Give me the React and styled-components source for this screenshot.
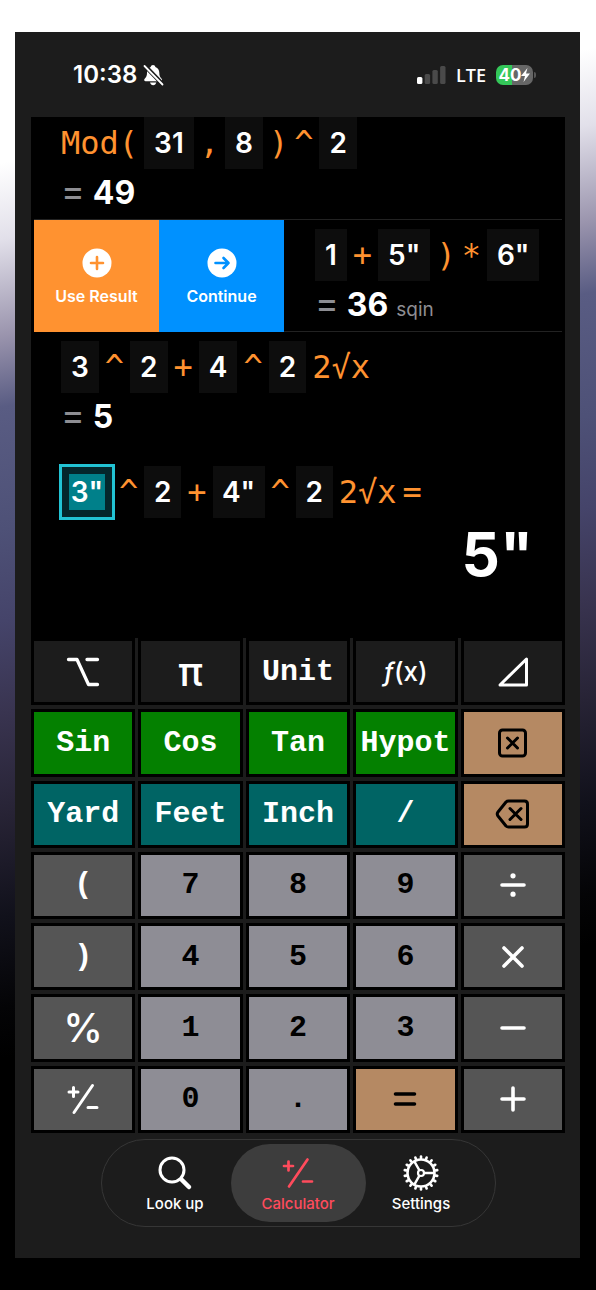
import React from "react";
import styled, { createGlobalStyle, css } from "styled-components";

const SANS = '"Inter", "Liberation Sans", sans-serif';
const MONO = '"DejaVu Sans Mono", "Liberation Mono", monospace';
const SLAB = '"Liberation Mono", "DejaVu Sans Mono", monospace';

const GlobalStyle = createGlobalStyle`
  * {
    box-sizing: border-box;
  }

  body {
    margin: 0;
    background: #000;
    font-family: ${SANS};
    color: #fff;
  }

  button, input {
    font: inherit;
    color: inherit;
    margin: 0;
    padding: 0;
    border: 0;
    border-radius: 0;
    background: none;
  }

  button {
    cursor: pointer;
  }
`;

const Page = styled.div`
  display: flex;
  min-height: 100vh;
  padding: 32px 16px 32px 15px;
  background: linear-gradient(
    169deg,
    #fff 160px,
    #e2e0ea 235px,
    #9a94ad 330px,
    #595c83 400px,
    #4e5177 520px,
    #45446a 610px,
    #393450 700px,
    #272335 800px,
    #11111b 900px,
    #040406 990px,
    #000 1040px
  );
`;

const Phone = styled.main`
  display: flex;
  flex-direction: column;
  flex: 1;
  min-width: 0;
  padding: 0 15px 31px 16px;
  background: #1c1c1c;
`;

const StatusBar = styled.header`
  display: flex;
  align-items: center;
  justify-content: space-between;
  height: 85px;
  padding: 0 29px 0 42px;
`;

const StatusGroup = styled.div`
  display: flex;
  align-items: center;
  gap: ${(props) => props.$gap}px;
`;

const Clock = styled.time`
  font-size: 24px;
  font-weight: 600;
`;

const Carrier = styled.span`
  font-family: "Open Sans", "Noto Sans", sans-serif;
  font-size: 18px;
  font-weight: 600;
`;

const BatteryWrap = styled.div`
  display: flex;
  align-items: center;
  gap: 1px;
`;

const BatteryBody = styled.div`
  display: flex;
  align-items: center;
  justify-content: center;
  width: 37px;
  height: 20px;
  border-radius: 7px;
  background: linear-gradient(90deg, #34c759 42%, #666 42%);
  font-size: 17px;
  font-weight: 700;
`;

const BatteryTip = styled.div`
  width: 2px;
  height: 6px;
  border-radius: 0 2px 2px 0;
  background: #555;
`;

const Display = styled.section`
  display: flex;
  flex-direction: column;
  background: #000;
`;

/* older entries scroll off the top edge */
const History = styled.div`
  display: flex;
  flex-direction: column;
  justify-content: flex-end;
  height: 327px;
  padding: 0 3px;
  overflow: hidden;
`;

const Entry = styled.div`
  display: flex;
  flex-shrink: 0;
  height: 112px;
`;

const EntryBody = styled.div`
  flex: 1;
  min-width: 0;
  padding: 9px 0 0 ${(props) => (props.$swiped ? 31 : 27)}px;
  border-bottom: 1px solid ${(props) => (props.$last ? "#000" : "#222")};
`;

const SwipeAction = styled.button`
  display: flex;
  flex-direction: column;
  align-items: center;
  justify-content: center;
  gap: 8px;
  width: 125px;
  padding-top: 2px;
  background: ${(props) => props.$color};
  font-size: 16px;
  font-weight: 600;
  line-height: 20px;
`;

const Expression = styled.div`
  display: flex;
  align-items: center;
  gap: 6px;
  height: 52px;
`;

const Operator = styled.span`
  color: #ff9230;
  font-family: ${MONO};
  font-size: 32px;
  line-height: 52px;
  white-space: pre;
`;

const chipStyle = css`
  height: 52px;
  background: #0d0d0d;
  font-size: 28px;
  font-weight: 600;
  text-align: center;
`;

const Chip = styled.button`
  ${chipStyle}
  padding: 0 10px;
`;

const Field = styled.input`
  ${chipStyle}
  width: ${(props) => (props.$wide ? 52 : 37)}px;

  ${(props) =>
    props.$selected &&
    css`
      padding: 8px;
      outline: 3px solid #22c3d4;
      outline-offset: -1px;
      background: linear-gradient(#00808a, #00808a) content-box, #04272c;
    `}
`;

const ResultLine = styled.div`
  display: flex;
  align-items: baseline;
  gap: 8px;
  line-height: 44px;
`;

const Equals = styled.span`
  color: #8e8e93;
  font-size: 36px;
  font-weight: 400;
`;

const ResultValue = styled.output`
  font-size: 32px;
  font-weight: 700;
`;

const UnitLabel = styled.span`
  color: #8e8e93;
  font-size: 19px;
`;

const Current = styled.div`
  padding: 22px 32px 0 30px;
`;

const CurrentResult = styled.output`
  display: block;
  height: 120px;
  font-size: 60px;
  font-weight: 700;
  line-height: 72px;
  text-align: right;
`;

const Keypad = styled.section`
  display: grid;
  flex: 1;
  grid-template-columns: repeat(5, minmax(0, 1fr));
  grid-template-rows: repeat(7, minmax(60px, 1fr));
  gap: 4px 3px;
`;

const TONES = {
  dark: ["#1c1c1c", "#fff"],
  green: ["#048000", "#fff"],
  teal: ["#006464", "#fff"],
  tan: ["#b58963", "#000"],
  grey: ["#555", "#fff"],
  digit: ["#8e8d95", "#000"],
};

const FACES = {
  slab: css`
    font-family: ${SLAB};
    font-size: 30px;
    font-weight: 700;
  `,
  sans: css`
    font-family: ${SANS};
    font-size: 40px;
    font-weight: 500;
  `,
  func: css`
    font-family: ${SANS};
    font-size: 26px;
    font-weight: 500;
  `,
};

const KeyButton = styled.button`
  display: flex;
  align-items: center;
  justify-content: center;
  border: 3px solid #000;
  background: ${(props) => TONES[props.$tone][0]};
  color: ${(props) => TONES[props.$tone][1]};
  && {
    ${(props) => FACES[props.$face || "slab"]}
    line-height: 40px;
  }
`;

const TabBar = styled.nav`
  display: flex;
  align-self: center;
  height: 88px;
  margin-top: 6px;
  padding: 4px 12px;
  border: 1px solid #363636;
  border-radius: 44px;
`;

const Tab = styled.a`
  display: flex;
  flex-direction: column;
  align-items: center;
  justify-content: center;
  gap: 4px;
  width: ${(props) => (props.$active ? 135 : 123)}px;
  margin: ${(props) => (props.$active ? "0 -6px" : "0")};
  padding-top: 2px;
  border-radius: 39px;
  background: ${(props) => (props.$active ? "#3d3d3d" : "none")};
  color: ${(props) => (props.$active ? "#ff4b5c" : "#fff")};
  font-size: 15px;
  font-weight: 500;
  line-height: 18px;
  text-decoration: none;
`;

/* Line icons, drawn around a centre of 0,0 */
const Icon = ({ width = 3, size = 40, children }) => (
  <svg
    width={size}
    height={size}
    viewBox={`${-size / 2} ${-size / 2} ${size} ${size}`}
    fill="none"
    stroke="currentColor"
    strokeWidth={width}
    strokeLinecap="round"
    strokeLinejoin="round"
    aria-hidden="true"
  >
    {children}
  </svg>
);

const OptionIcon = () => (
  <Icon width={3.3}>
    <path d="M-14.5 -12.5H-6L5.5 12.5H14.5M4 -12.5H14.5" />
  </Icon>
);

const TriangleIcon = () => (
  <Icon>
    <path d="M13.500 -13V13H-13Z" />
  </Icon>
);

const ClearIcon = () => (
  <Icon>
    <rect x="-13.500" y="-13" width="26" height="26" rx="3" />
    <path d="M-5.500 -5L4.500 5M4.500 -5L-5.500 5" />
  </Icon>
);

const BackspaceIcon = () => (
  <Icon>
    <path d="M-4.500 -13H11.500Q14.500 -13 14.500 -10V10Q14.500 13 11.500 13H-4.500Q-6 13 -7 12L-15 2Q-16.500 0 -15 -2L-7 -12Q-6 -13 -4.500 -13Z" />
    <path d="M-3 -5.500L8 5.500M8 -5.500L-3 5.500" />
  </Icon>
);

const DivideIcon = () => (
  <Icon width={3.6}>
    <path d="M-11 0H11" />
    <circle cy="-9.200" r="2.600" fill="currentColor" stroke="none" />
    <circle cy="9.200" r="2.600" fill="currentColor" stroke="none" />
  </Icon>
);

const TimesIcon = () => (
  <Icon width={3.6}>
    <path d="M-9 -9L9 9M9 -9L-9 9" />
  </Icon>
);

const MinusIcon = () => (
  <Icon width={3.6}>
    <path d="M-11 0H11" />
  </Icon>
);

const PlusIcon = () => (
  <Icon width={3.6}>
    <path d="M-11 0H11M0 -11V11" />
  </Icon>
);

const EqualIcon = () => (
  <Icon width={3.6}>
    <path d="M-9.500 -5H9.500M-9.500 5H9.500" />
  </Icon>
);

const SignIcon = ({ width = 3, size = 40 }) => (
  <Icon width={width} size={size}>
    <path d="M-14 -7H-5M-9.500 -11.500V-2.500M9.500 -13.500L-9 13.500M5 8.500H14" />
  </Icon>
);

const SearchIcon = () => (
  <Icon size={36}>
    <circle cx="-3" cy="-3" r="12" />
    <path d="M7 7L14 14" strokeWidth="4.500" />
  </Icon>
);

/* spokes run right, upper left and lower left */
const GearIcon = () => (
  <Icon size={36} width={2.6}>
    <circle r="13.500" />
    <circle r="3" strokeWidth="2.200" />
    {Array.from({ length: 18 }, (_, i) => (
      <path key={i} d="M15 0H16.500" transform={`rotate(${i * 20 + 10})`} />
    ))}
    {[0, 120, 240].map((angle) => (
      <path key={angle} d="M4 0H12.500" strokeWidth="2.400" transform={`rotate(${angle})`} />
    ))}
  </Icon>
);

const CircleIcon = ({ color, path }) => (
  <svg width="30" height="30" viewBox="-15 -15 30 30" aria-hidden="true">
    <circle r="14.500" fill="#fff" />
    <path
      d={path}
      fill="none"
      stroke={color}
      strokeWidth="2.600"
      strokeLinecap="round"
      strokeLinejoin="round"
    />
  </svg>
);

const BellOffIcon = () => (
  <svg width="21" height="22" viewBox="0 0 21 22" aria-hidden="true">
    <path
      d="M10 1C11.300 1 12.200 1.800 12.400 2.900C15 3.900 16.300 6 16.300 8.800C16.300 12 17 13.200 18.600 14.800C19.600 15.900 19.100 17.200 17.700 17.200H2.600C1.200 17.200 .700 15.900 1.700 14.800C3.300 13.200 4 12 4 8.800C4 6 5.200 3.900 7.700 2.900C7.900 1.800 8.800 1 10 1ZM7 18.600H13.300C12.900 20.300 11.700 21.200 10.200 21.200C8.600 21.200 7.400 20.300 7 18.600Z"
      fill="#fff"
    />
    <path d="M1.500 1.500L19.500 20" stroke="#1c1c1c" strokeWidth="4.400" />
    <path d="M1.500 2L19.500 20.500" stroke="#fff" strokeWidth="1.800" strokeLinecap="round" />
  </svg>
);

const SignalIcon = () => (
  <svg width="29" height="18" viewBox="0 0 29 18" aria-hidden="true">
    <rect x="0" y="11" width="5.400" height="7" rx="1.500" fill="#fff" />
    <rect x="7.700" y="8" width="5.400" height="10" rx="1.500" fill="#4a4a4a" />
    <rect x="15.400" y="4" width="5.400" height="14" rx="1.500" fill="#4a4a4a" />
    <rect x="23.100" y="0" width="5.400" height="18" rx="1.500" fill="#4a4a4a" />
  </svg>
);

const BoltIcon = () => (
  <svg width="9" height="14" viewBox="0 0 9 14" aria-hidden="true">
    <path d="M6.500 0L0 8H4L2.500 14L9 5.500H5Z" fill="#fff" />
  </svg>
);

const KEYS = [
  { label: "Option", icon: <OptionIcon />, tone: "dark" },
  { text: "π", tone: "dark", face: "sans" },
  { text: "Unit", tone: "dark" },
  { label: "Function", text: <><i>ƒ</i>(x)</>, tone: "dark", face: "func" },
  { label: "Triangle", icon: <TriangleIcon />, tone: "dark" },
  { text: "Sin", tone: "green" },
  { text: "Cos", tone: "green" },
  { text: "Tan", tone: "green" },
  { text: "Hypot", tone: "green" },
  { label: "Clear", icon: <ClearIcon />, tone: "tan" },
  { text: "Yard", tone: "teal" },
  { text: "Feet", tone: "teal" },
  { text: "Inch", tone: "teal" },
  { text: "/", tone: "teal" },
  { label: "Backspace", icon: <BackspaceIcon />, tone: "tan" },
  { text: "(", tone: "grey" },
  { text: "7", tone: "digit" },
  { text: "8", tone: "digit" },
  { text: "9", tone: "digit" },
  { label: "Divide", icon: <DivideIcon />, tone: "grey" },
  { text: ")", tone: "grey" },
  { text: "4", tone: "digit" },
  { text: "5", tone: "digit" },
  { text: "6", tone: "digit" },
  { label: "Multiply", icon: <TimesIcon />, tone: "grey" },
  { text: "%", tone: "grey", face: "sans" },
  { text: "1", tone: "digit" },
  { text: "2", tone: "digit" },
  { text: "3", tone: "digit" },
  { label: "Subtract", icon: <MinusIcon />, tone: "grey" },
  { label: "Change sign", icon: <SignIcon />, tone: "grey" },
  { text: "0", tone: "digit" },
  { text: ".", tone: "digit" },
  { label: "Equals", icon: <EqualIcon />, tone: "tan" },
  { label: "Add", icon: <PlusIcon />, tone: "grey" },
];

const Result = ({ value, unit }) => (
  <ResultLine>
    <Equals>=</Equals>
    <ResultValue>{value}</ResultValue>
    {unit && <UnitLabel>{unit}</UnitLabel>}
  </ResultLine>
);

export default class App extends React.Component {
  render() {
    return (
      <Page>
        <GlobalStyle />
        <Phone>
          <StatusBar>
            <StatusGroup $gap={6}>
              <Clock>10:38</Clock>
              <BellOffIcon />
            </StatusGroup>
            <StatusGroup $gap={10}>
              <SignalIcon />
              <Carrier>LTE</Carrier>
              <BatteryWrap>
                <BatteryBody>
                  40
                  <BoltIcon />
                </BatteryBody>
                <BatteryTip />
              </BatteryWrap>
            </StatusGroup>
          </StatusBar>

          <Display>
            <History>
              <Entry>
                <EntryBody>
                  <Expression>
                    <Operator>Mod(</Operator>
                    <Chip>31</Chip>
                    <Operator>,</Operator>
                    <Chip>8</Chip>
                    <Operator>)</Operator>
                    <Operator>^</Operator>
                    <Chip>2</Chip>
                  </Expression>
                  <Result value="49" />
                </EntryBody>
              </Entry>
              <Entry>
                <SwipeAction $color="#ff9230">
                  <CircleIcon color="#ff9230" path="M-6 0H6M0 -6V6" />
                  Use Result
                </SwipeAction>
                <SwipeAction $color="#0091ff">
                  <CircleIcon color="#0091ff" path="M-6.500 0H6.500M1.500 -5L6.500 0L1.500 5" />
                  Continue
                </SwipeAction>
                <EntryBody $swiped>
                  <Expression>
                    <Chip>1</Chip>
                    <Operator>+</Operator>
                    <Chip>5"</Chip>
                    <Operator>)</Operator>
                    <Operator>*</Operator>
                    <Chip>6"</Chip>
                  </Expression>
                  <Result value="36" unit="sqin" />
                </EntryBody>
              </Entry>
              <Entry>
                <EntryBody $last>
                  <Expression>
                    <Chip>3</Chip>
                    <Operator>^</Operator>
                    <Chip>2</Chip>
                    <Operator>+</Operator>
                    <Chip>4</Chip>
                    <Operator>^</Operator>
                    <Chip>2</Chip>
                    <Operator>2√x</Operator>
                  </Expression>
                  <Result value="5" />
                </EntryBody>
              </Entry>
            </History>

            <Current>
              <Expression>
                <Field aria-label="First side" defaultValue={'3"'} $wide $selected />
                <Operator>^</Operator>
                <Field aria-label="First exponent" defaultValue="2" />
                <Operator>+</Operator>
                <Field aria-label="Second side" defaultValue={'4"'} $wide />
                <Operator>^</Operator>
                <Field aria-label="Second exponent" defaultValue="2" />
                <Operator>2√x</Operator>
                <Operator>=</Operator>
              </Expression>
              <CurrentResult>5"</CurrentResult>
            </Current>
          </Display>

          <Keypad>
            {KEYS.map((key) => (
              <KeyButton
                key={key.label || key.text}
                aria-label={key.label}
                $tone={key.tone}
                $face={key.face}
              >
                {key.icon || <span>{key.text}</span>}
              </KeyButton>
            ))}
          </Keypad>

          <TabBar>
            <Tab href="#lookup">
              <SearchIcon />
              Look up
            </Tab>
            <Tab href="#calculator" $active>
              <SignIcon width={2.7} size={36} />
              Calculator
            </Tab>
            <Tab href="#settings">
              <GearIcon />
              Settings
            </Tab>
          </TabBar>
        </Phone>
      </Page>
    );
  }
}
